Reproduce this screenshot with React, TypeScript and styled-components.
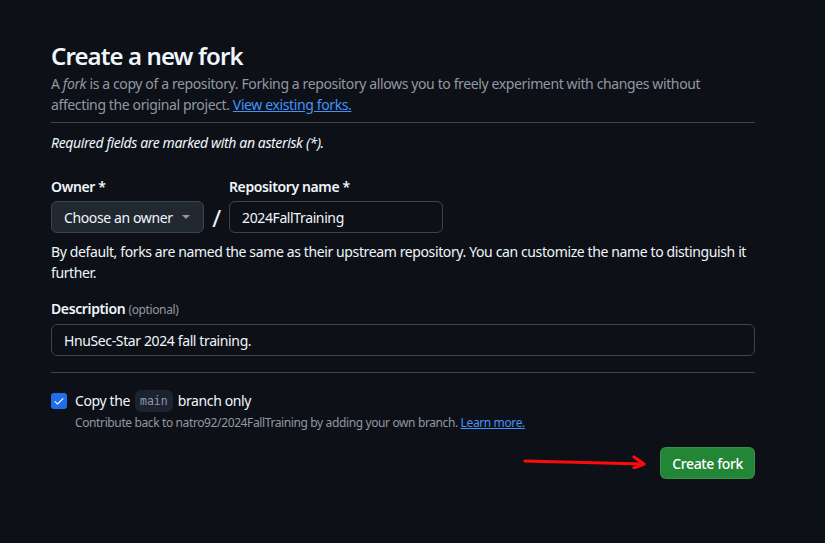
import React from "react";
import styled, { createGlobalStyle } from "styled-components";

const Global = createGlobalStyle`
  html, body {
    margin: 0;
    padding: 0;
    background: #0d1117;
  }
  body {
    font-family: "Noto Sans", "Liberation Sans", sans-serif;
    color: #f0f6fc;
    font-size: 14px;
    letter-spacing: -0.38px;
  }
  * { box-sizing: border-box; }
`;

const App = () => {
  return (
    <>
      <Global />
      <Page>
        <Form>
          <Subhead>
            <Title>Create a new fork</Title>
            <Lead>
              A <em>fork</em> is a copy of a repository. Forking a repository allows you to freely experiment with changes without
              affecting the original project. <Link href="#">View existing forks.</Link>
            </Lead>
          </Subhead>
          <Required>Required fields are marked with an asterisk (*).</Required>

          <NameRow>
            <Field>
              <Label>Owner *</Label>
              <Select>
                Choose an owner
                <Caret />
              </Select>
            </Field>
            <Slash>/</Slash>
            <Field>
              <Label>Repository name *</Label>
              <Input $width={214} defaultValue="2024FallTraining" />
            </Field>
          </NameRow>
          <Help>
            By default, forks are named the same as their upstream repository. You can customize the name to distinguish it further.
          </Help>

          <DescField>
            <Label>
              Description <Optional>(optional)</Optional>
            </Label>
            <Input defaultValue="HnuSec-Star 2024 fall training." />
          </DescField>

          <Divider />

          <CheckRow>
            <Checkbox>
              <svg width="12" height="12" viewBox="0 0 16 16" fill="#fff">
                <path d="M13.78 4.22a.75.75 0 0 1 0 1.06l-7.25 7.25a.75.75 0 0 1-1.06 0L2.22 9.28a.75.75 0 0 1 1.06-1.06L6 10.94l6.72-6.72a.75.75 0 0 1 1.06 0Z" />
              </svg>
            </Checkbox>
            <CheckText>
              Copy the <Code>main</Code> branch only
            </CheckText>
          </CheckRow>
          <Note>
            Contribute back to natro92/2024FallTraining by adding your own branch. <Link href="#">Learn more.</Link>
          </Note>

          <Actions>
            <Arrow width="130" height="14" viewBox="0 0 130 14">
              <path d="M3 6 L121 9" stroke="#ff0a0a" strokeWidth="3.2" strokeLinecap="round" fill="none" />
              <path d="M112 2 L122 9 L112 13" stroke="#ff0a0a" strokeWidth="3.2" strokeLinecap="round" strokeLinejoin="round" fill="none" />
            </Arrow>
            <Button>Create fork</Button>
          </Actions>
        </Form>
      </Page>
    </>
  );
};

export default App;

const Page = styled.main`
  min-height: 543px;
  padding: 38px 0 0 51px;
`;
const Form = styled.div`
  width: 704px;
  display: flex;
  flex-direction: column;
`;
const Subhead = styled.div`
  padding-bottom: 7px;
  border-bottom: 1px solid #3d444d;
`;
const Title = styled.h1`
  margin: 0;
  font-size: 24px;
  line-height: 36px;
  font-weight: 600;
  letter-spacing: -0.9px;
  color: #f0f6fc;
`;
const Lead = styled.p`
  margin: -1px 0 0;
  font-size: 14px;
  line-height: 21px;
  color: #9198a1;
  em { font-style: italic; }
`;
const Link = styled.a`
  color: #4493f8;
  text-decoration: underline;
`;
const Required = styled.p`
  margin: 9px 0 0;
  font-size: 14px;
  line-height: 21px;
  font-style: italic;
  color: #f0f6fc;
`;
const NameRow = styled.div`
  display: flex;
  align-items: flex-end;
  margin-top: 24px;
`;
const Field = styled.div`
  display: flex;
  flex-direction: column;
  gap: 4px;
`;
const Label = styled.label`
  font-size: 14px;
  line-height: 20px;
  font-weight: 600;
  color: #f0f6fc;
`;
const Optional = styled.span`
  font-size: 12px;
  font-weight: 400;
  color: #9198a1;
`;
const Select = styled.div`
  width: 153px;
  height: 32px;
  display: flex;
  align-items: center;
  justify-content: space-between;
  padding: 0 13px 0 12px;
  background: #212830;
  border: 1px solid #3d444d;
  border-radius: 6px;
  font-size: 14px;
  white-space: nowrap;
  color: #f0f6fc;
`;
const Caret = styled.span`
  width: 0;
  height: 0;
  border-left: 4px solid transparent;
  border-right: 4px solid transparent;
  border-top: 4px solid #9198a1;
`;
const Slash = styled.span`
  width: 25px;
  height: 32px;
  text-align: center;
  font-size: 24px;
  line-height: 34px;
  color: #f0f6fc;
`;
const Input = styled.input<{ $width?: number }>`
  width: ${(p) => (p.$width ? `${p.$width}px` : "100%")};
  height: 32px;
  padding: 0 12px;
  background: #0d1117;
  border: 1px solid #3d444d;
  border-radius: 6px;
  font-family: inherit;
  letter-spacing: inherit;
  font-size: 14px;
  color: #f0f6fc;
  outline: none;
`;
const Help = styled.p`
  margin: 8px 0 0;
  font-size: 14px;
  line-height: 21px;
  color: #f0f6fc;
`;
const DescField = styled(Field)`
  margin-top: 16px;
`;
const Divider = styled.hr`
  margin: 16px 0 0;
  border: 0;
  border-top: 1px solid #3d444d;
`;
const CheckRow = styled.div`
  display: flex;
  align-items: center;
  gap: 8px;
  margin-top: 17px;
`;
const Checkbox = styled.span`
  width: 16px;
  height: 16px;
  display: flex;
  align-items: center;
  justify-content: center;
  background: #1f6feb;
  border-radius: 3px;
`;
const CheckText = styled.span`
  font-size: 14px;
  line-height: 22px;
  color: #f0f6fc;
  display: flex;
  align-items: center;
  gap: 5px;
`;
const Code = styled.code`
  font-family: "DejaVu Sans Mono", "Liberation Mono", monospace;
  font-size: 11.5px;
  letter-spacing: 0;
  line-height: 22px;
  padding: 0 5px;
  border-radius: 6px;
  background: #1c2330;
  color: #9198a1;
`;
const Note = styled.p`
  margin: 2px 0 0 24px;
  font-size: 12px;
  line-height: 18px;
  color: #9198a1;
`;
const Actions = styled.div`
  position: relative;
  display: flex;
  justify-content: flex-end;
  margin-top: 15px;
`;
const Arrow = styled.svg`
  position: absolute;
  right: 103px;
  top: 8px;
`;
const Button = styled.button`
  height: 32px;
  padding: 0 11px;
  background: #238636;
  border: 1px solid rgba(240, 246, 252, 0.1);
  border-radius: 6px;
  font-family: inherit;
  letter-spacing: inherit;
  font-size: 14px;
  font-weight: 500;
  color: #fff;
  cursor: pointer;
`;
